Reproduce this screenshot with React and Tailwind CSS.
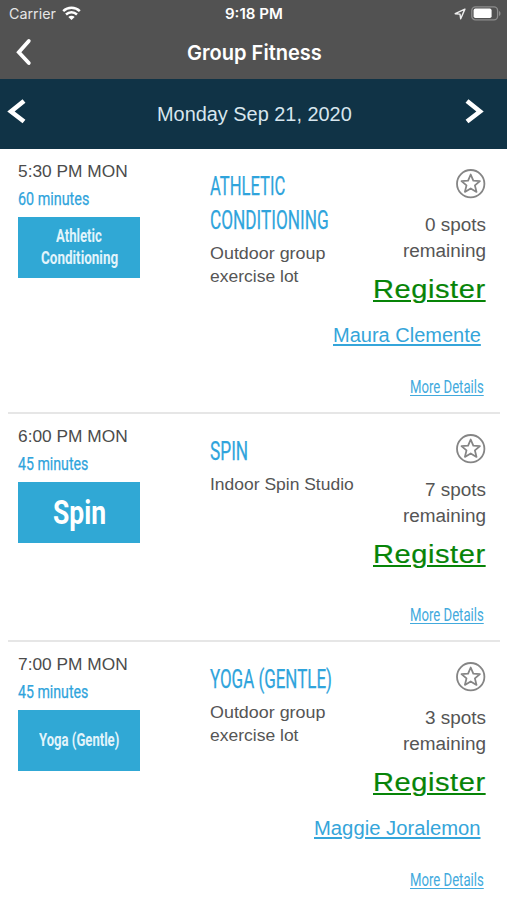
import { useLayoutEffect, useRef, useState } from "react";

// Single line of text condensed or widened to an exact measure.
function Fit({ width, className = "", children }) {
  const ref = useRef(null);
  const [scale, setScale] = useState(1);
  useLayoutEffect(() => {
    setScale(width / ref.current.offsetWidth);
  }, [width, children]);
  return (
    <span className="block" style={{ width }}>
      <span
        ref={ref}
        className={`inline-block origin-left whitespace-nowrap ${className}`}
        style={{ transform: `scaleX(${scale})` }}
      >
        {children}
      </span>
    </span>
  );
}

const classes = [
  {
    time: "5:30 PM MON",
    duration: ["60 minutes", 71],
    badge: [["Athletic", 46], ["Conditioning", 77]],
    title: [["ATHLETIC", 75], ["CONDITIONING", 119]],
    place: [["Outdoor group", 115], ["exercise lot", 88]],
    spots: "0 spots",
    instructor: ["Maura Clemente", 148],
    height: "h-[266px]",
    detailsGap: "mb-[11px]",
  },
  {
    time: "6:00 PM MON",
    duration: ["45 minutes", 70],
    badge: [["Spin", 53]],
    large: true,
    title: [["SPIN", 38]],
    place: [["Indoor Spin Studio", 144]],
    spots: "7 spots",
    height: "h-[228px]",
    detailsGap: "mb-[11px]",
  },
  {
    time: "7:00 PM MON",
    duration: ["45 minutes", 70],
    badge: [["Yoga (Gentle)", 80]],
    title: [["YOGA (GENTLE)", 122]],
    place: [["Outdoor group", 115], ["exercise lot", 88]],
    spots: "3 spots",
    instructor: ["Maggie Joralemon", 167],
    height: "h-[265px]",
    detailsGap: "mb-[13px]",
  },
];

function StatusBar() {
  return (
    <div className="grid h-[27px] grid-cols-3 items-center pl-[9px] pr-[6px] text-[14px] leading-[27px] text-[#e6e6e6]">
      <div className="flex items-center gap-[6px]">
        <Fit width={47}>Carrier</Fit>
        <svg width="19" height="14" viewBox="0 0 19 14" fill="none" stroke="#fff" strokeWidth="2.5" className="-mt-[2px]">
          <path d="M1.2 5.1C5.8.7 13.2.7 17.8 5.1" />
          <path d="M4 8.5C7.2 5.5 11.8 5.5 15 8.5" />
          <path d="M6.3 10.9C8.2 9.2 10.8 9.2 12.7 10.9L9.5 13.9z" fill="#fff" stroke="none" />
        </svg>
      </div>
      <div className="-ml-[3px] flex justify-center font-semibold text-white">
        <Fit width={58}>9:18 PM</Fit>
      </div>
      <div className="flex items-center justify-end gap-[5px]">
        <svg width="12" height="12" viewBox="0 0 12 12" fill="none" stroke="#eee" strokeWidth="1.4" strokeLinejoin="round">
          <path d="M10.9 1.1 1.2 5.7 6 6.1 6.7 10.8z" />
        </svg>
        <svg width="30" height="15" viewBox="0 0 30 15">
          <rect x=".8" y=".8" width="25.8" height="13" rx="3.6" fill="none" stroke="#8d8d8d" strokeWidth="1.3" />
          <rect x="2.6" y="2.6" width="18" height="9.4" rx="1.8" fill="#fff" />
          <path d="M28 5v5c2-.8 2-4.2 0-5z" fill="#8d8d8d" />
        </svg>
      </div>
    </div>
  );
}

function Chevron({ d, className = "", width = 4, cap = "round" }) {
  return (
    <svg width="20" height="28" viewBox="0 0 20 28" fill="none" stroke="#fff" strokeWidth={width} strokeLinecap={cap} className={className}>
      <path d={d} />
    </svg>
  );
}

function StarBadge() {
  return (
    <svg width="30" height="30" viewBox="0 0 30 30" fill="none" stroke="#858585">
      <circle cx="14.7" cy="14.7" r="13.7" strokeWidth="1.8" />
      <path
        d="M14.7 5.5 L17.3 11.6 L23.9 12.1 L18.9 16.4 L20.5 22.9 L14.7 19.4 L8.9 22.9 L10.5 16.4 L5.5 12.1 L12.1 11.6 Z"
        strokeWidth="1.8"
        strokeLinejoin="round"
      />
    </svg>
  );
}

function ClassRow({ item, first, last }) {
  return (
    <article className={`ml-2 mr-[7px] flex flex-col pl-[10px] ${item.height} ${last ? "" : "border-b-2 border-[#e6e6e6]"}`}>
      <div className={`flex h-[158px] shrink-0 ${first ? "" : "-mt-px"}`}>
        <div className="w-[192px] pt-[10px]">
          <div className="text-[17px] leading-[27px] text-[#4b4b4b]">
            <Fit width={110}>{item.time}</Fit>
          </div>
          <div className="font-[Roboto] text-[19px] leading-[27px] text-[#2fa4dc]">
            <Fit width={item.duration[1]} className="[-webkit-text-stroke:0.25px_#2fa4dc]">{item.duration[0]}</Fit>
          </div>
          <div
            className={`mt-[5px] flex h-[61px] w-[122px] flex-col items-center justify-center bg-[#30a8d5] pb-[2px] font-[Roboto] font-bold ${
              item.large ? "text-[34px] leading-[40px] text-white" : "text-[18px] leading-[21.5px] text-[#e2f4fb]"
            }`}
          >
            {item.badge.map(([text, w]) => (
              <Fit key={text} width={w}>{text}</Fit>
            ))}
          </div>
        </div>
        <div className="flex-1 pt-[22px]">
          <h2 className="font-[Roboto] text-[25px] leading-[34px] text-[#2fa4dc]">
            {item.title.map(([text, w]) => (
              <Fit key={text} width={w} className="[-webkit-text-stroke:0.25px_#2fa4dc]">{text}</Fit>
            ))}
          </h2>
          <div className="mt-1 text-[16.5px] leading-[23px] text-[#555]">
            {item.place.map(([text, w]) => (
              <Fit key={text} width={w}>{text}</Fit>
            ))}
          </div>
        </div>
        <div className="mr-[14px] flex w-[120px] flex-col items-end pt-[21px] text-[#555]">
          <StarBadge />
          <div className="mt-[14px] flex flex-col items-end text-[18px] leading-[25.5px]">
            <Fit width={61}>{item.spots}</Fit>
            <Fit width={83}>remaining</Fit>
          </div>
          <a className="mt-[8px] text-[26.5px] leading-[34px] text-[#078407]">
            <Fit width={113} className="tracking-[0.5px] underline decoration-2 underline-offset-[2px] [-webkit-text-stroke:0.2px_#078407]">Register</Fit>
          </a>
        </div>
      </div>
      {item.instructor && (
        <a className="mr-[19px] mt-[15px] self-end text-[20px] leading-[28px] text-[#35a5da]">
          <Fit width={item.instructor[1]} className="underline decoration-[1.5px] underline-offset-[2px]">{item.instructor[0]}</Fit>
        </a>
      )}
      <a className={`mr-[16px] mt-auto self-end font-[Roboto] text-[19px] leading-[28px] text-[#42aadd] ${item.detailsGap}`}>
        <Fit width={74} className="underline decoration-1 underline-offset-[2px]">More Details</Fit>
      </a>
    </article>
  );
}

export default function App() {
  return (
    <div className="h-[900px] w-[507px] overflow-hidden bg-white font-['Liberation_Sans',sans-serif]">
      <header className="h-[79px] bg-[#525252] font-[Inter]">
        <StatusBar />
        <div className="flex h-[51px] items-center">
          <Chevron d="M13.8 3 3.8 14.2 13.8 25" className="-mt-[2px] ml-[15px]" width={3.8} />
          <h1 className="ml-[152px] text-[20.5px] font-semibold leading-[30px] text-white">
            <Fit width={135}>Group Fitness</Fit>
          </h1>
        </div>
      </header>
      <nav className="flex h-[70px] items-center justify-between bg-[#103346] px-[7px] pb-[6px]">
        <Chevron d="M17 4 4 14.5 17 24.5" width={4.6} cap="butt" />
        <div className="ml-[17px] mt-[6px] text-[20px] leading-[30px] text-[#d7e6ee]">
          <Fit width={195}>Monday Sep 21, 2020</Fit>
        </div>
        <Chevron d="M3 4 16 14.5 3 24.5" width={4.6} cap="butt" className="mr-[16px]" />
      </nav>
      <main className="-mt-px">
        {classes.map((item, i) => (
          <ClassRow key={item.time} item={item} first={i === 0} last={i === classes.length - 1} />
        ))}
      </main>
    </div>
  );
}
